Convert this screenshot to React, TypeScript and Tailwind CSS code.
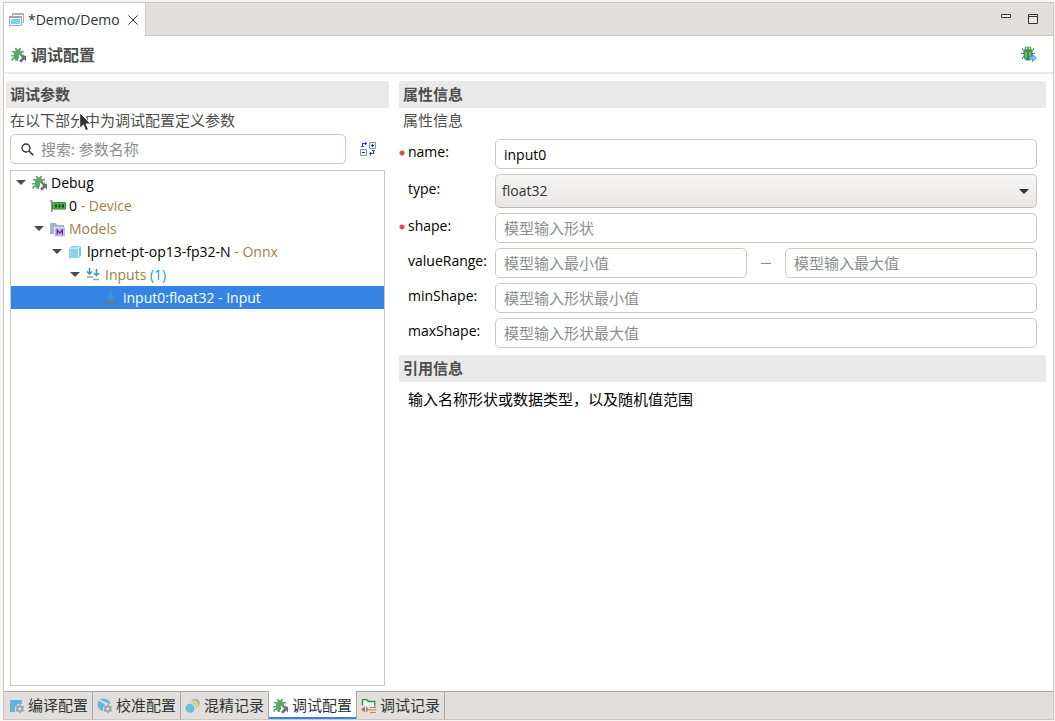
import React, { useState } from "react";

function EditorIcon() {
  return (
    <svg width="16" height="16" viewBox="0 0 16 16" aria-hidden="true">
      <path d="M3.500 4V1.500h11v9H13" fill="none" stroke="#a5b1bd" />
      <path d="M3 1h12v2H3z" fill="#a5b1bd" />
      <path d="M.5 4.500h12v9H.5z" fill="#fff" stroke="#9aa7b5" />
      <path d="M0 4h13v2H0z" fill="#9aa7b5" />
      <path d="M2 7h9v5H2z" fill="#7fd0ee" />
    </svg>
  );
}

function BugLaunchIcon() {
  return (
    <svg width="16" height="16" viewBox="0 0 16 16" aria-hidden="true">
      <g fill="none" stroke="#59a869" strokeWidth="1.600">
        <path d="M4.300 1l1.500 2M9.500 1L8 3M.8 4.800h2.400l1.300 1M13 4.800h-2.400l-1.300 1M.2 8.700h4M1.200 13.800v-1.800l2.800-1.500M9 8.200h4" />
      </g>
      <path d="M4 5C4.200 3 5.300 2.200 7 2.200S9.800 3 10 5z" fill="#59a869" />
      <path
        d="M3 5h8v3H8v3.200l-1 1V14c-2.500.3-4-1.700-4-4.300z"
        fill="#59a869"
      />
      <path d="M9.300 8.800H15v5.700l-1.900-1.900-3.100 3.100-1.900-1.900 3.100-3.100z" fill="#6e6e6e" />
    </svg>
  );
}

function RunBugIcon() {
  return (
    <svg width="18" height="16" viewBox="0 0 18 16" aria-hidden="true">
      <path
        d="M2.500 2.500v1.500l2 1.500M13.500 2.500v1.500l-2 1.500M1 7.500h3M12 7.500h3M2.500 13v-1.500l2-1.500"
        fill="none"
        stroke="#4c8a58"
      />
      <path d="M5 .8h6l.8 3.700H4.200z" fill="#55ad58" />
      <path d="M6 1.500h1v1.500H6zM9 1.500h1v1.500H9z" fill="#d4efc9" />
      <path d="M4 4.500h8v7L10 14H6l-2-2.500z" fill="#4fa557" stroke="#357f45" strokeWidth=".8" />
      <path d="M5.500 6h1.200v6H5.500zM9.300 6h1v4h-1z" fill="#86cb7b" />
      <path d="M8 5v9" stroke="#2b6c3b" />
      <path
        d="M9 10.800h3.500v-2.300l4 3.500-4 3.500v-2.300H9z"
        fill="#7cc9f8"
        stroke="#3a86d2"
        strokeWidth=".8"
      />
    </svg>
  );
}

function DeviceIcon() {
  return (
    <svg width="16" height="16" viewBox="0 0 16 16" aria-hidden="true">
      <path d="M-.5 3h2.300v11" fill="none" stroke="#8b8f8b" strokeWidth="1.500" />
      <path d="M2.500 4.500h13v6.500h-13z" fill="#4caf50" stroke="#3c8f42" />
      <path d="M5 6.500h2v3H5zM8.500 6.500h2v3h-2zM12 6.500h2v3h-2z" fill="#1d4a23" />
      <path d="M4 11.500h11" stroke="#b0a85b" strokeDasharray="1 1" />
    </svg>
  );
}

function ModelsIcon() {
  return (
    <svg width="16" height="16" viewBox="0 0 16 16" aria-hidden="true">
      <path d="M0 2h6l1.500 2H14v2H4v7H0z" fill="#aab4bd" />
      <path d="M4.500 6.500H15v9H4.500z" fill="#c9b3f5" />
      <path
        d="M7.200 13.800V8.900l2.500 3.200 2.600-3.200v4.900"
        fill="none"
        stroke="#4a3474"
        strokeWidth="1.200"
      />
    </svg>
  );
}

function CubeIcon() {
  return (
    <svg width="16" height="16" viewBox="0 0 16 16" aria-hidden="true">
      <path d="M1 4.500h9V14H1z" fill="#8bd3ec" />
      <path d="M1.300 3.800L3.500 2H13l-2.300 1.800z" fill="#8bd3ec" />
      <path d="M10.800 4.500L13 2.700v9L10.800 14z" fill="#72c4e4" />
    </svg>
  );
}

function InputsIcon() {
  return (
    <svg width="16" height="16" viewBox="0 0 16 16" aria-hidden="true">
      <path
        d="M3.500 1v6M1 4.500L3.500 7 6 4.500M10.500 2v6.500M8 6l2.500 2.500L13 6"
        fill="none"
        stroke="#3592c4"
        strokeWidth="1.500"
      />
      <path d="M1 10h6M7 12.500h6" stroke="#9aa7b0" strokeWidth="1.500" />
    </svg>
  );
}

function InputIcon() {
  return (
    <svg width="16" height="16" viewBox="0 0 16 16" aria-hidden="true">
      <path
        d="M7 1.500v7M3.500 5.500L7 9l3.500-3.500"
        fill="none"
        stroke="#369bd3"
        strokeWidth="1.800"
      />
      <path d="M1 11.500h12v2H1z" fill="#6e7680" />
    </svg>
  );
}

function Gear() {
  return (
    <g>
      <circle cx="10.800" cy="10.800" r="2.500" fill="none" stroke="#9aa7b0" strokeWidth="2" />
      <path
        d="M10.800 6.500v2M10.800 13v2.200M7 8.600l1.700 1M13 12l1.700 1M7 13l1.700-1M13 9.600l1.700-1"
        stroke="#9aa7b0"
        strokeWidth="1.800"
      />
    </g>
  );
}

function CompileIcon() {
  return (
    <svg width="16" height="16" viewBox="0 0 16 16" aria-hidden="true">
      <path d="M1 2h12v4H9L6 9v5H1z" fill="#5fb8dc" />
      <Gear />
    </svg>
  );
}

function CalibrateIcon() {
  return (
    <svg width="16" height="16" viewBox="0 0 16 16" aria-hidden="true">
      <path d="M2.800 1.500l10.500 5C14 3.800 10.500.8 7 .8c-1.800 0-3.200 0-4.200.7z" fill="#5fb8dc" />
      <path d="M1.500 2.800C-.8 7 1.500 12.500 6 13V9.500l2-3.200z" fill="#5fb8dc" />
      <Gear />
    </svg>
  );
}

function MixIcon() {
  return (
    <svg width="16" height="16" viewBox="0 0 16 16" aria-hidden="true">
      <circle cx="10.200" cy="5.200" r="4.500" fill="#8fc68c" />
      <circle cx="8" cy="7.300" r="4.900" fill="#e1dedb" />
      <circle cx="7.600" cy="7.700" r="4.500" fill="#f3bf7a" />
      <circle cx="5.600" cy="9.600" r="5" fill="#e1dedb" />
      <circle cx="5" cy="10.200" r="4.500" fill="#6bbede" />
    </svg>
  );
}

function RecordIcon() {
  return (
    <svg width="16" height="16" viewBox="0 0 16 16" aria-hidden="true">
      <path
        d="M1.500 7.500V1.700h4.300L7.500 3.500h6.300v5"
        fill="#edf5ed"
        stroke="#2f8f4e"
        strokeWidth="1.300"
      />
      <path d="M4 8.500v6l-4-3z" fill="#db5860" />
      <path d="M5 8.500v6l3-3z" fill="#59a869" />
      <path d="M9 9.500h6M8 12h7M9 14.500h6" stroke="#e27a3c" strokeWidth="1.200" />
    </svg>
  );
}

function ExpandCollapseIcon() {
  return (
    <svg width="16" height="16" viewBox="0 0 16 16" aria-hidden="true">
      <path d="M9.500 1.500h6v6h-6zM.5 8.500h6v6h-6z" fill="#f4f8fd" stroke="#7d93b8" />
      <path d="M11 4.500h3M12.500 3v3M2 11.500h3" stroke="#0b3b86" strokeWidth="1.200" />
      <path
        d="M2.500 6V2.500H7M5.500 1v3M1 5.500h3M13.500 9v3.500H9M10.500 11v3.500M12 9.500h3"
        fill="none"
        stroke="#2450b8"
        strokeWidth="1.200"
      />
    </svg>
  );
}

function Triangle({ className }: { className: string }) {
  return (
    <svg width="10" height="5" viewBox="0 0 10 5" className={className} aria-hidden="true">
      <path d="M0 0h10L5 5z" fill="currentColor" />
    </svg>
  );
}

type Node = {
  pad: string;
  open?: boolean;
  icon: React.ReactNode;
  name?: string;
  note?: string;
  count?: string;
  selected?: boolean;
};

const nodes: Node[] = [
  { pad: "pl-1", open: true, icon: <BugLaunchIcon />, name: "Debug" },
  { pad: "pl-[22px]", icon: <DeviceIcon />, name: "0", note: " - Device" },
  { pad: "pl-[22px]", open: true, icon: <ModelsIcon />, note: "Models" },
  { pad: "pl-10", open: true, icon: <CubeIcon />, name: "lprnet-pt-op13-fp32-N", note: " - Onnx" },
  { pad: "pl-[58px]", open: true, icon: <InputsIcon />, note: "Inputs", count: " (1)" },
  { pad: "pl-[76px]", icon: <InputIcon />, name: "input0:float32 - Input", selected: true },
];

function TreeRow({ node }: { node: Node }) {
  const tone = node.selected ? "bg-[#3584e4] text-white" : "text-black";
  return (
    <li
      role="treeitem"
      aria-selected={!!node.selected}
      className={`flex h-[23px] items-center whitespace-pre text-sm ${node.pad} ${tone}`}
    >
      {node.open ? (
        <button type="button" aria-label="Collapse" className="flex w-3 justify-center text-[#4a4a4a]">
          <Triangle className="block" />
        </button>
      ) : (
        <span className="w-3" />
      )}
      <span className="ml-[5px] mr-[3px] shrink-0">{node.icon}</span>
      <span>
        {node.name}
        {node.note && <span className="text-[#9c8145]">{node.note}</span>}
        {node.count && <span className="text-[#1c9bcb]">{node.count}</span>}
      </span>
    </li>
  );
}

function SectionTitle({ children }: { children: React.ReactNode }) {
  return (
    <h2 className="h-[27px] rounded-t-xs bg-[#e9e9e9] px-1 text-[15px] leading-[27px] font-bold text-[#4d4d4d]">
      {children}
    </h2>
  );
}

const fieldBox =
  "h-[30px] w-full min-w-0 rounded-[5px] border border-[#cdc7c2] bg-white px-2 text-black outline-none placeholder:text-[15px] placeholder:text-[#8b8e8f]";

function FieldLabel({ id, text, required }: { id: string; text: string; required?: boolean }) {
  return (
    <label htmlFor={id} className="flex items-center pb-1 text-sm text-black">
      <span className="w-[9px] shrink-0">
        {required && (
          <svg width="6" height="6" viewBox="0 0 6 6" className="mt-0.5" aria-hidden="true">
            <path d="M3 0v6M0 3h6M.8.8l4.400 4.400M5.200.8L.8 5.200" stroke="#e0616b" />
            <circle cx="3" cy="3" r="2" fill="#d9434f" />
          </svg>
        )}
      </span>
      {text}
    </label>
  );
}

const pages = [
  { label: "编译配置", icon: <CompileIcon /> },
  { label: "校准配置", icon: <CalibrateIcon /> },
  { label: "混精记录", icon: <MixIcon /> },
  { label: "调试配置", icon: <BugLaunchIcon /> },
  { label: "调试记录", icon: <RecordIcon /> },
];

export default function App() {
  const [page, setPage] = useState(3);
  const [name, setName] = useState("input0");

  return (
    <div className="flex h-screen flex-col bg-[#f6f5f4] pt-0.5 pr-px pb-px pl-[3px] font-['Open_Sans','Noto_Sans_CJK_SC',sans-serif]">
      <div className="flex min-h-0 flex-1 flex-col border border-[#cdc7c2] bg-white">
        <header className="flex h-[33px] shrink-0 border-b border-[#cdc7c2] bg-[#e1dedb]">
          <div className="-mb-px flex items-center border-r border-[#cdc7c2] bg-white pr-[7px] pl-[5px] text-sm text-[#2e3436]">
            <EditorIcon />
            <span className="ml-[3px]">*Demo/Demo</span>
            <button type="button" aria-label="Close" className="ml-2">
              <svg width="10" height="10" viewBox="0 0 10 10" aria-hidden="true">
                <path d="M.5.5l9 9M9.500.5l-9 9" stroke="#333" />
              </svg>
            </button>
          </div>
          <div className="ml-auto flex items-start gap-[17px] pt-[11px] pr-[15px]">
            <button type="button" aria-label="Minimize">
              <svg width="10" height="10" viewBox="0 0 10 10" className="block" aria-hidden="true">
                <path d="M.5.5h9v3h-9z" fill="#f6f5f4" stroke="#2e3436" />
              </svg>
            </button>
            <button type="button" aria-label="Maximize">
              <svg width="10" height="10" viewBox="0 0 10 10" className="block" aria-hidden="true">
                <path d="M.5.5h9v9h-9zM.5 2.500h9" fill="#e9e6e3" stroke="#2e3436" />
              </svg>
            </button>
          </div>
        </header>

        <div className="flex h-[38px] shrink-0 items-center border-b-2 border-[#e9e9e9] pt-0.5 pr-[15px] pl-[7px]">
          <BugLaunchIcon />
          <h1 className="ml-1 text-base font-bold text-[#4d4d4d]">调试配置</h1>
          <button type="button" aria-label="Debug" className="mb-0.5 ml-auto">
            <RunBugIcon />
          </button>
        </div>

        <main className="grid min-h-0 flex-1 grid-cols-[383fr_647fr] gap-x-2.5 pt-[7px] pr-[7px] pb-[5px] pl-0.5">
          <section className="flex min-h-0 flex-col">
            <SectionTitle>调试参数</SectionTitle>
            <div className="relative pl-1">
              <p className="h-[26px] text-[15px] leading-6 text-[#4d4d4d]">
                在以下部分中为调试配置定义参数
              </p>
              <svg
                width="13"
                height="20"
                viewBox="0 0 13 20"
                className="absolute top-1 left-[73px]"
                aria-hidden="true"
              >
                <path
                  d="M.7.700v15.600l3.600-3.300 2.400 5.700 2.800-1.200-2.400-5.500h5z"
                  fill="#333"
                  stroke="#fff"
                />
              </svg>
            </div>
            <div className="flex items-center pl-1">
              <label className="flex h-[30px] w-[336px] items-center rounded-[5px] border border-[#cdc7c2] bg-white pl-2.5">
                <svg width="13" height="13" viewBox="0 0 13 13" className="shrink-0" aria-hidden="true">
                  <circle cx="5" cy="5" r="4" fill="none" stroke="#2e3436" strokeWidth="1.300" />
                  <path d="M8 8l4.300 4.300" stroke="#2e3436" strokeWidth="1.600" />
                </svg>
                <input
                  type="search"
                  aria-label="搜索"
                  placeholder="搜索: 参数名称"
                  className="ml-[7px] min-w-0 flex-1 bg-transparent text-[15px] outline-none placeholder:text-[#8b8e8f]"
                />
              </label>
              <button type="button" aria-label="Expand or collapse all" className="ml-3.5">
                <ExpandCollapseIcon />
              </button>
            </div>
            <ul role="tree" className="mt-1.5 mr-1 ml-1 flex-1 border border-[#cdc7c2] bg-white">
              {nodes.map((node, i) => (
                <TreeRow key={i} node={node} />
              ))}
            </ul>
          </section>

          <section className="min-w-0">
            <SectionTitle>属性信息</SectionTitle>
            <p className="h-[26px] pl-1 text-[15px] leading-6 text-[#4d4d4d]">属性信息</p>
            <form className="mt-[5px] grid grid-cols-[96px_1fr] gap-y-[5px] pr-[9px] text-sm">
              <FieldLabel id="name" text="name:" required />
              <input id="name" value={name} onChange={(e) => setName(e.target.value)} className={fieldBox} />

              <FieldLabel id="type" text="type:" />
              <div className="relative">
                <select
                  id="type"
                  className="block h-[34px] w-full appearance-none rounded-[5px] border border-[#cdc7c2] border-b-[#bfb8b1] bg-linear-to-b from-[#f6f5f4] to-[#e9e8e6] px-1.5 text-[#2e3436] outline-none"
                >
                  <option>float32</option>
                </select>
                <Triangle className="pointer-events-none absolute top-[15px] right-2 text-[#2e3436]" />
              </div>

              <FieldLabel id="shape" text="shape:" required />
              <input id="shape" placeholder="模型输入形状" className={fieldBox} />

              <FieldLabel id="min" text="valueRange:" />
              <div className="flex items-center">
                <input id="min" placeholder="模型输入最小值" className={fieldBox} />
                <span className="mx-3.5 h-px w-2.5 shrink-0 bg-[#8b8e8f]" />
                <input aria-label="max" placeholder="模型输入最大值" className={fieldBox} />
              </div>

              <FieldLabel id="minShape" text="minShape:" />
              <input id="minShape" placeholder="模型输入形状最小值" className={fieldBox} />

              <FieldLabel id="maxShape" text="maxShape:" />
              <input id="maxShape" placeholder="模型输入形状最大值" className={fieldBox} />
            </form>
            <div className="mt-[7px]">
              <SectionTitle>引用信息</SectionTitle>
              <p className="pt-[5px] pl-[9px] text-[15px] leading-6 text-black">
                输入名称形状或数据类型，以及随机值范围
              </p>
            </div>
          </section>
        </main>

        <nav className="flex h-7 shrink-0 border-t border-[#aaa6a2] bg-[#e1dedb] pl-px">
          {pages.map((p, i) => (
            <button
              key={p.label}
              type="button"
              onClick={() => setPage(i)}
              className={`flex items-center gap-[3px] border-r border-r-[#aaa6a2] px-1 text-[15px] text-[#2e3436] ${
                i === page ? "-mt-px bg-white pt-px shadow-[inset_0_-2px_#3584e4]" : ""
              }`}
            >
              {p.icon}
              <span>{p.label}</span>
            </button>
          ))}
        </nav>
      </div>
    </div>
  );
}
